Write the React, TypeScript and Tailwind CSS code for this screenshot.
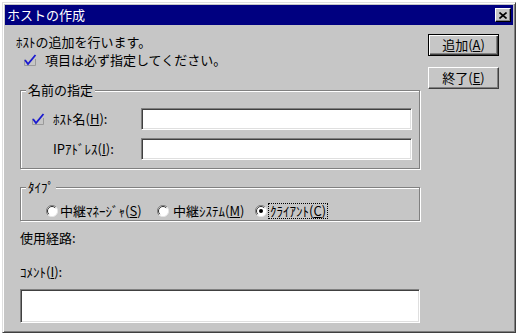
import React from "react"

const font = { fontFamily: '"Noto Sans CJK JP", "Noto Sans", sans-serif' }

function Check() {
  return (
    <svg width="14" height="14" viewBox="0 0 14 14" className="shrink-0">
      <path d="M1.5 6.5 V12.5 H12.5 V6" fill="none" stroke="#9a9a9a" strokeWidth="1" />
      <path d="M2 7 L5 11 L12.5 2" fill="none" stroke="#1a1ad0" strokeWidth="1.8" />
    </svg>
  )
}

function Radio({ checked }: { checked?: boolean }) {
  return (
    <svg width="12" height="12" viewBox="0 0 12 12" className="shrink-0">
      <circle cx="6" cy="6" r="5.5" fill="#fff" />
      <path d="M10 2 A5.5 5.5 0 0 0 2 10" fill="none" stroke="#808080" strokeWidth="1" />
      <path d="M9.2 2.8 A4.5 4.5 0 0 0 2.8 9.2" fill="none" stroke="#303030" strokeWidth="1" />
      <path d="M2 10 A5.5 5.5 0 0 0 10 2" fill="none" stroke="#e6e6e6" strokeWidth="1" />
      {checked && <circle cx="6" cy="6" r="2" fill="#000" />}
    </svg>
  )
}

function Field({ className }: { className: string }) {
  return (
    <div
      className={
        "bg-white border border-t-[#808080] border-l-[#808080] border-b-white border-r-white shadow-[inset_1px_1px_0_#404040,inset_-1px_-1px_0_#dfdfdf] " +
        className
      }
    />
  )
}

function Button({ children, main }: { children: React.ReactNode; main?: boolean }) {
  return (
    <div
      className={
        "w-[71px] h-[22px] flex items-center justify-center text-[13px] text-black bg-[#c6c6c6] " +
        (main
          ? "border border-black shadow-[inset_1px_1px_0_#fff,inset_-1px_-1px_0_#404040,inset_-2px_-2px_0_#808080]"
          : "border border-t-white border-l-white border-b-[#404040] border-r-[#404040] shadow-[inset_-1px_-1px_0_#808080]")
      }
    >
      {children}
    </div>
  )
}

function Group({
  title,
  legend,
  className,
  children,
}: {
  title: string
  legend: string
  className: string
  children: React.ReactNode
}) {
  return (
    <fieldset
      className={
        "ml-[4px] w-[400px] border border-[#808080] shadow-[1px_1px_0_#fff,inset_1px_1px_0_#fff] " + className
      }
    >
      <legend className={"px-[2px] h-[16px] leading-[16px] text-[13px] bg-[#c6c6c6] " + legend}>{title}</legend>
      {children}
    </fieldset>
  )
}

export default function App() {
  return (
    <div className="w-[520px] h-[335px] bg-white pt-[2px] pl-[2px] overflow-hidden" style={font}>
      <div className="w-[514px] h-[331px] bg-[#c6c6c6] border border-t-[#dfdfdf] border-l-[#dfdfdf] border-b-[#404040] border-r-[#404040] shadow-[inset_1px_1px_0_#fff,inset_-1px_-1px_0_#808080] p-[2px]">
        <div className="h-[20px] bg-[#000080] flex items-center justify-between pl-[2px] pr-[2px]">
          <span className="text-white text-[13px] leading-[16px]">ホストの作成</span>
          <div className="w-[16px] h-[14px] bg-[#c6c6c6] border border-t-white border-l-white border-b-black border-r-black shadow-[inset_-1px_-1px_0_#808080] flex items-center justify-center">
            <svg width="8" height="7" viewBox="0 0 8 7">
              <path d="M0.5 0.5 L7.5 6.5 M7.5 0.5 L0.5 6.5" stroke="#000" strokeWidth="1.6" />
            </svg>
          </div>
        </div>

        <div className="flex pl-[11px] pt-[9px] text-[13px] text-black">
          <div className="w-[403px] flex flex-col">
            <div className="h-[16px] leading-[16px]">ﾎｽﾄの追加を行います。</div>
            <div className="mt-[2px] h-[16px] flex items-center pl-[7px]">
              <Check />
              <span className="ml-[8px] leading-[16px]">項目は必ず指定してください。</span>
            </div>

            <Group title="名前の指定" legend="-ml-[5px]" className="mt-[14px] h-[87px] pl-[10px] pr-[7px] pt-[10px]">
              <div className="flex items-center h-[22px]">
                <div className="w-[110px] flex items-center">
                  <Check />
                  <span className="ml-[8px]">
                    ﾎｽﾄ名(<span className="underline">H</span>):
                  </span>
                </div>
                <Field className="w-[271px] h-[22px]" />
              </div>
              <div className="flex items-center h-[22px] mt-[8px]">
                <div className="w-[110px] pl-[22px]">
                  IPｱﾄﾞﾚｽ(<span className="underline">I</span>):
                </div>
                <Field className="w-[271px] h-[22px]" />
              </div>
            </Group>

            <Group title="ﾀｲﾌﾟ" legend="-ml-[20px] leading-[13px]" className="mt-[10px] h-[42px] pl-[25px] pt-[8px]">
              <div className="flex items-center h-[16px]">
                <Radio />
                <span className="ml-[2px] w-[97px] whitespace-nowrap">
                  中継ﾏﾈｰｼﾞｬ(<span className="underline">S</span>)
                </span>
                <Radio />
                <span className="ml-[4px] w-[82px] whitespace-nowrap">
                  中継ｼｽﾃﾑ(<span className="underline">M</span>)
                </span>
                <Radio checked />
                <span className="ml-[1px] px-[1px] border border-dotted border-black leading-[14px] whitespace-nowrap">
                  ｸﾗｲｱﾝﾄ(<span className="underline">C</span>)
                </span>
              </div>
            </Group>

            <div className="mt-[9px] ml-[4px] h-[16px] leading-[16px]">使用経路:</div>
            <div className="mt-[18px] ml-[4px] h-[16px] leading-[16px]">
              ｺﾒﾝﾄ(<span className="underline">I</span>):
            </div>
            <Field className="mt-[9px] ml-[4px] w-[400px] h-[34px]" />
          </div>

          <div className="ml-[9px] flex flex-col gap-[11px]">
            <Button main>
              追加(<span className="underline">A</span>)
            </Button>
            <Button>
              終了(<span className="underline">E</span>)
            </Button>
          </div>
        </div>
      </div>
    </div>
  )
}
